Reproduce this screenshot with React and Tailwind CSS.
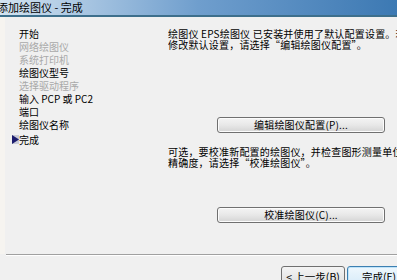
import React from 'react';

const steps = [
  { label: '开始', active: true },
  { label: '网络绘图仪', active: false },
  { label: '系统打印机', active: false },
  { label: '绘图仪型号', active: true },
  { label: '选择驱动程序', active: false },
  { label: '输入 PCP 或 PC2', active: true },
  { label: '端口', active: true },
  { label: '绘图仪名称', active: true },
  { label: '完成', active: true, current: true },
];

const WinButton = ({ children, className = '' }) => (
  <div
    className={`h-[16px] flex items-center justify-center rounded-[3px] border border-[#707070] bg-gradient-to-b from-[#f4f4f4] via-[#e8e8e8] to-[#d4d4d4] text-[10px] leading-none text-black shadow-[inset_0_0_0_1px_#fcfcfc] ${className}`}
  >
    {children}
  </div>
);

const App = () => {
  return (
    <div
      className="w-[397px] h-[280px] overflow-hidden bg-[#f0f0f0] text-black"
      style={{ fontFamily: '"Noto Sans CJK SC", "Liberation Sans", sans-serif' }}
    >
      {/* Title bar */}
      <div className="h-[15px] flex items-center bg-gradient-to-r from-[#d3e3f0] via-[#6f9ecd] to-[#3c79b3]">
        <span className="ml-[-3px] text-[11px] leading-[15px] whitespace-nowrap">添加绘图仪 - 完成</span>
      </div>
      <div className="h-[2px] bg-[#3d6f8c]" />

      {/* Body */}
      <div className="h-[237px] flex">
        <div className="w-[168px] shrink-0 pt-[10px] pl-[7px] border-l-[5px] border-[#f6f4f0]">
          {steps.map((s) => (
            <div
              key={s.label}
              className={`flex items-center h-[13px] text-[10px] leading-[13px] whitespace-nowrap ${s.current ? 'mt-[2px]' : ''}`}
            >
              <span className="w-[7px] h-[10px] flex items-center">
                {s.current && (
                  <svg width="7" height="9" viewBox="0 0 7 9" className="bg-[#c9cbd6]">
                    <path d="M0 0 L7 4.5 L0 9 Z" fill="#1c1c6e" />
                  </svg>
                )}
              </span>
              <span className={s.active ? 'text-black' : 'text-[#a9a9a9]'}>{s.label}</span>
            </div>
          ))}
        </div>

        <div className="flex-1 min-w-0 overflow-hidden pt-[11px] text-[10px] leading-[11px] whitespace-nowrap tracking-[0.2px]">
          <div>绘图仪 EPS绘图仪 已安装并使用了默认配置设置。若要</div>
          <div>修改默认设置，请选择“编辑绘图仪配置”。</div>

          <WinButton className="w-[168px] ml-[49px] mt-[67px]">编辑绘图仪配置(P)...</WinButton>

          <div className="mt-[13px]">可选，要校准新配置的绘图仪，并检查图形测量单位的</div>
          <div>精确度，请选择“校准绘图仪”。</div>

          <WinButton className="w-[168px] ml-[49px] mt-[39px]">校准绘图仪(C)...</WinButton>
        </div>
      </div>

      {/* Separator */}
      <div className="ml-[6px] h-[2px] border-t border-[#a0a0a0] border-b border-b-white" />

      {/* Footer */}
      <div className="flex gap-[2px] pl-[281px] pt-[10px] whitespace-nowrap">
        <div className="w-[64px] h-[22px] shrink-0 flex items-center justify-center rounded-[3px] border border-[#707070] bg-gradient-to-b from-[#f4f4f4] to-[#dcdcdc] text-[10.5px] leading-none">
          &lt; 上一步(B)
        </div>
        <div className="w-[64px] h-[22px] shrink-0 flex items-center justify-center rounded-[3px] border border-[#3c7fb1] bg-gradient-to-b from-[#eef7fd] to-[#d3e9f8] shadow-[inset_0_0_0_1px_#bfe3f9] text-[10.5px] leading-none">
          完成(F)
        </div>
      </div>
    </div>
  );
};

export default App;
